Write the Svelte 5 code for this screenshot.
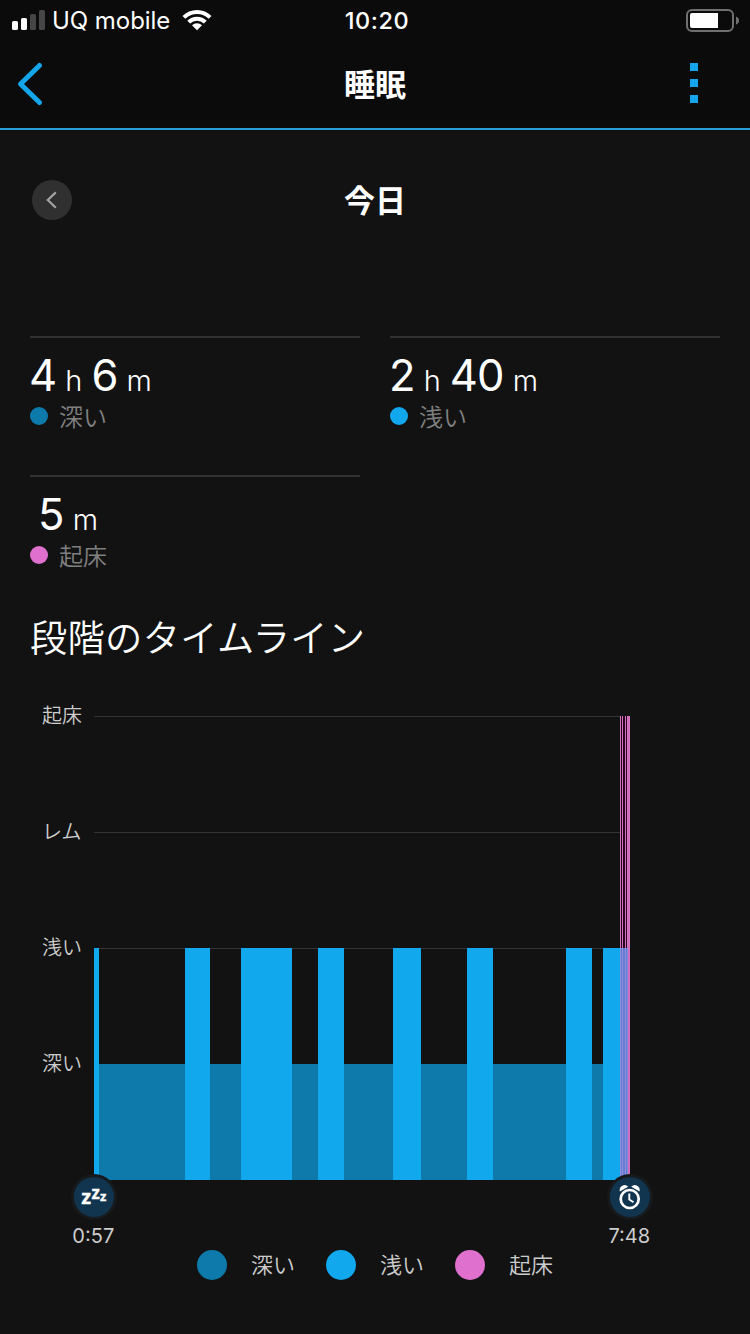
<script>
  const deep = '#0d7aab';
  const light = '#11a8ee';
  const awake = '#e070ce';

  const metrics = [
    { parts: [['4', 'h'], ['6', 'm']], label: '深い', color: deep },
    { parts: [['2', 'h'], ['40', 'm']], label: '浅い', color: light },
    { parts: [['5', 'm']], label: '起床', color: awake, indent: true }
  ];

  const levels = [
    { y: 716, label: '起床' },
    { y: 832, label: 'レム' },
    { y: 948, label: '浅い' },
    { y: 1064, label: '深い' }
  ];

  const deepBars = [[99, 185], [210, 241], [292, 318], [344, 393], [421, 467], [493, 566], [592, 603]];
  const lightBars = [[94, 99], [185, 210], [241, 292], [318, 344], [393, 421], [467, 493], [566, 592], [603, 628]];
  const awakeBars = [[620, 621], [622, 623], [625, 626], [627, 630]];

  const legend = [['深い', deep], ['浅い', light], ['起床', awake]];
</script>

<div class="screen">
  <header>
    <div class="status">
      <div class="carrier">
        <svg class="signal" width="34" height="22" viewBox="0 0 34 22">
          <rect x="0" y="12" width="6" height="9" rx="1.6" fill="#fff" />
          <rect x="9" y="9" width="6" height="12" rx="1.6" fill="#fff" />
          <rect x="18" y="5" width="6" height="16" rx="1.6" fill="#464646" />
          <rect x="27" y="1" width="6" height="20" rx="1.6" fill="#464646" />
        </svg>
        <span class="name">UQ mobile</span>
        <svg class="wifi" width="30" height="22" viewBox="0 0 30 22">
          <g fill="none" stroke="#fff" stroke-width="4">
            <path d="M1.9 8.4a18.3 18.3 0 0 1 26.2 0" />
            <path d="M6.7 13.1a11.7 11.7 0 0 1 16.6 0" />
          </g>
          <path d="M10 16.3a7.2 7.2 0 0 1 10 0L15 21.2z" fill="#fff" />
        </svg>
      </div>
      <div class="clock">10:20</div>
      <svg class="battery" width="54" height="24" viewBox="0 0 54 24">
        <rect x="1" y="1" width="46" height="21" rx="5" fill="none" stroke="#707070" stroke-width="2" />
        <path d="M6 4h26v15H6a2 2 0 0 1-2-2V6a2 2 0 0 1 2-2z" fill="#fff" />
        <path d="M50 7.5q3 1 3 4t-3 4z" fill="#707070" />
      </svg>
    </div>
    <nav>
      <svg width="32" height="48" viewBox="0 0 32 48">
        <path d="M25.5 5.5 6.5 24l19 18.5" fill="none" stroke="#14a5ea" stroke-width="5" stroke-linecap="round" stroke-linejoin="round" />
      </svg>
      <h1>睡眠</h1>
      <div class="more"><i></i><i></i><i></i></div>
    </nav>
  </header>

  <div class="day">
    <div class="prev">
      <svg width="40" height="40" viewBox="0 0 40 40">
        <path d="M23.8 12.4 15.8 20l8 7.8" fill="none" stroke="#a3a3a3" stroke-width="2.2" />
      </svg>
    </div>
    <h2>今日</h2>
    <span></span>
  </div>

  <section class="metrics">
    {#each metrics as m}
      <div class="metric">
        <div class="value" class:indent={m.indent}>
          {#each m.parts as [n, u]}<span class="num">{n}</span><span class="unit">{u}</span>{/each}
        </div>
        <div class="label"><i style="background:{m.color}"></i><span>{m.label}</span></div>
      </div>
    {/each}
  </section>

  <h3>段階のタイムライン</h3>

  <svg class="chart" width="750" height="560" viewBox="0 690 750 560">
    {#each levels as l}
      <text class="axis" x="42" y={l.y + 7}>{l.label}</text>
      <rect x="94" y={l.y} width="536" height="1" fill="#343434" />
    {/each}
    <g shape-rendering="crispEdges">
      {#each deepBars as [a, b]}
        <rect x={a} y="1064" width={b - a} height="116" fill={deep} />
      {/each}
      {#each lightBars as [a, b]}
        <rect x={a} y="948" width={b - a} height="232" fill={light} />
      {/each}
      <rect x="620" y="716" width="8" height="232" fill="#250520" />
      <rect x="620" y="948" width="8" height="232" fill="#667bd4" />
      {#each awakeBars as [a, b]}
        <rect x={a} y="716" width={b - a} height="232" fill="#d270bd" />
        <rect x={a} y="948" width={b - a} height="232" fill={a === 627 ? '#d270bd' : '#8f90dc'} />
      {/each}
      <rect x="627" y="948" width="1" height="232" fill="#788bdc" />
    </g>
    <circle cx="94" cy="1197" r="23" fill="#171a1d" />
    <circle cx="94" cy="1197" r="20" fill="#11344f" />
    <g class="zzz">
      <text x="81.2" y="1204.3" font-size="20">z</text>
      <text x="91.4" y="1198.6" font-size="17">z</text>
      <text x="100" y="1201.3" font-size="13">z</text>
    </g>
    <circle cx="630" cy="1197" r="23" fill="#171a1d" />
    <circle cx="630" cy="1197" r="20" fill="#11344f" />
    <g fill="none" stroke="#fff">
      <circle cx="629.7" cy="1199" r="9" stroke-width="2.7" />
      <path d="M629.3 1193.6v6l4.2 2.7" stroke-width="1.9" />
    </g>
    <path d="M619.8 1191.5q-.8-4.4 3-6 3-1.2 5.4 1.2zM639.6 1191.5q.8-4.4-3-6-3-1.2-5.4 1.2z" fill="#fff" />
    <text class="time" x="93.3" y="1243">0:57</text>
    <text class="time" x="629.3" y="1243">7:48</text>
  </svg>

  <div class="legend">
    {#each legend as [name, color]}
      <div class="item"><i style="background:{color}"></i>{name}</div>
    {/each}
  </div>
</div>

<style>
  :global(body) { background: #121212; }
  .screen {
    width: 750px;
    height: 1334px;
    overflow: hidden;
    background: #121212;
    color: #fff;
    font-family: Inter, "Noto Sans CJK JP", sans-serif;
  }
  svg { display: block; }
  header {
    box-sizing: border-box;
    height: 130px;
    background: #0b0b0b;
    border-bottom: 2px solid #289fd8;
  }
  .status {
    display: grid;
    grid-template-columns: 1fr 80px 1fr;
    height: 40px;
    align-items: center;
    padding: 0 10px 0 12px;
  }
  .carrier { display: flex; align-items: center; }
  .name {
    margin-left: 6px;
    width: 124px;
    padding-top: 2px;
    font-size: 24px;
    line-height: 38px;
    letter-spacing: -0.05px;
    white-space: nowrap;
  }
  .wifi { margin-left: 6px; }
  .clock { padding: 2px 0 0 2px; font-size: 23.5px; line-height: 38px; font-weight: 550; text-align: center; letter-spacing: 0.6px; }
  .battery { justify-self: end; margin-top: 2px; }
  nav {
    display: grid;
    grid-template-columns: 84px 1fr 84px;
    align-items: center;
    height: 88px;
    padding: 0 14px;
  }
  h1, h2, h3 { margin: 0; }
  h1 { padding-top: 2px; font-size: 31px; line-height: 46px; font-weight: 700; text-align: center; }
  .more { display: flex; flex-direction: column; gap: 8px; align-items: center; padding-bottom: 2px; }
  .more i { width: 8px; height: 8px; background: #14a5ea; }
  .day {
    display: grid;
    grid-template-columns: 40px 1fr 40px;
    align-items: start;
    padding: 50px 32px 0;
    height: 40px;
  }
  .prev { width: 40px; height: 40px; border-radius: 50%; background: #303030; }
  h2 { padding-top: 1px; font-size: 31px; line-height: 40px; font-weight: 700; text-align: center; }
  .metrics {
    display: grid;
    grid-template-columns: 330px 330px;
    column-gap: 30px;
    grid-auto-rows: 139px;
    padding: 116px 30px 0;
  }
  .metric { border-top: 2px solid #323232; }
  .value { display: flex; align-items: baseline; height: 54px; line-height: 74px; margin-left: -1px; }
  .value.indent { padding-left: 9px; }
  .num { font-size: 43.5px; letter-spacing: -0.8px; }
  .unit { font-size: 29px; font-weight: 350; margin: 0 9px 0 9px; }
  .label { display: flex; align-items: center; height: 48px; font-size: 24px; font-weight: 350; color: #808080; line-height: 48px; }
  .label i { width: 18px; height: 18px; border-radius: 50%; margin-right: 11px; }
  .label span { padding-top: 3px; }
  h3 { padding-left: 30px; font-size: 37.3px; font-weight: 350; letter-spacing: 0.25px; line-height: 50px; height: 76px; white-space: nowrap; }
  .axis { font-size: 20px; font-weight: 350; fill: #ccc; }
  .time { font-size: 20px; fill: #ccc; text-anchor: middle; }
  .zzz { font-family: "Noto Sans", sans-serif; font-weight: 700; fill: #fff; stroke: #fff; stroke-width: 0.3px; }
  .legend { display: flex; padding-left: 197px; gap: 31px; height: 30px; }
  .item { display: flex; align-items: center; font-size: 22px; line-height: 30px; font-weight: 350; color: #ccc; }
  .item i { width: 30px; height: 30px; border-radius: 50%; margin-right: 24px; }
</style>
